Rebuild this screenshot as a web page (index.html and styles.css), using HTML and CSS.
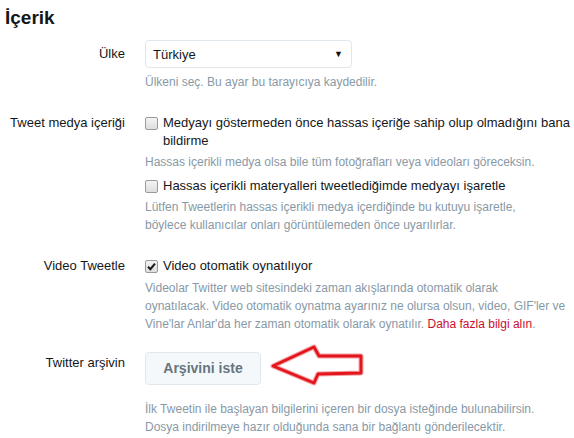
FILE: index.html
```html
<!DOCTYPE html>
<html lang="tr">
<head>
<meta charset="utf-8">
<title>İçerik</title>
<link rel="stylesheet" href="styles.css">
</head>
<body>
<div class="page">
  <h1 class="title">İçerik</h1>

  <div class="row row-country">
    <div class="label label-select">Ülke</div>
    <div class="control">
      <div class="select">
        <span class="select-value">Türkiye</span>
        <span class="select-caret">▼</span>
      </div>
      <p class="help help-select">Ülkeni seç. Bu ayar bu tarayıcıya kaydedilir.</p>
    </div>
  </div>

  <div class="row row-media">
    <div class="label">Tweet medya içeriği</div>
    <div class="control">
      <div class="check">
        <span class="box"></span>
        <span class="check-text">Medyayı göstermeden önce hassas içeriğe sahip olup olmadığını bana<br>bildirme</span>
      </div>
      <p class="help help-check">Hassas içerikli medya olsa bile tüm fotoğrafları veya videoları göreceksin.</p>
      <div class="check check-second">
        <span class="box"></span>
        <span class="check-text">Hassas içerikli materyalleri tweetlediğimde medyayı işaretle</span>
      </div>
      <p class="help help-check">Lütfen Tweetlerin hassas içerikli medya içerdiğinde bu kutuyu işaretle,<br>böylece kullanıcılar onları görüntülemeden önce uyarılırlar.</p>
    </div>
  </div>

  <div class="row row-video">
    <div class="label">Video Tweetle</div>
    <div class="control">
      <div class="check">
        <span class="box box-checked">
          <svg viewBox="0 0 13 13" width="13" height="13"><path d="M3 6.8 L5.4 9.2 L10 3.6" fill="none" stroke="#1a1a1a" stroke-width="2"/></svg>
        </span>
        <span class="check-text">Video otomatik oynatılıyor</span>
      </div>
      <p class="help help-video">Videolar Twitter web sitesindeki zaman akışlarında otomatik olarak<br>oynatılacak. Video otomatik oynatma ayarınız ne olursa olsun, video, GIF'ler ve<br>Vine'lar Anlar'da her zaman otomatik olarak oynatılır. <a class="link" href="#">Daha fazla bilgi alın</a>.</p>
    </div>
  </div>

  <div class="row row-archive">
    <div class="label label-archive">Twitter arşivin</div>
    <div class="control">
      <div class="button-line">
        <button class="btn" type="button">Arşivini iste</button>
        <svg class="arrow" viewBox="0 0 96 44" width="96" height="44">
          <path d="M4 22 L45 3 L50 12 L92 12 L92 29 L49 30 L45 39 Z" fill="none" stroke="#f4a3a5" stroke-width="5" stroke-linejoin="round"/>
          <path d="M4 22 L45 3 L50 12 L92 12 L92 29 L49 30 L45 39 Z" fill="none" stroke="#e3161d" stroke-width="2.8" stroke-linejoin="round"/>
        </svg>
      </div>
      <p class="help help-archive">İlk Tweetin ile başlayan bilgilerini içeren bir dosya isteğinde bulunabilirsin.<br>Dosya indirilmeye hazır olduğunda sana bir bağlantı gönderilecektir.</p>
    </div>
  </div>
</div>
</body>
</html>
```

FILE: styles.css
```css
html, body {
  margin: 0;
  padding: 0;
  background: #ffffff;
}

body {
  font-family: "Liberation Sans", Arial, sans-serif;
  color: #14171a;
  font-size: 13px;
}

.page {
  width: 574px;
  height: 438px;
  overflow: hidden;
}

.title {
  margin: 0;
  padding: 6px 5px 0;
  font-size: 19px;
  line-height: 24px;
  font-weight: bold;
  color: #14171a;
}

.row {
  display: flex;
  align-items: flex-start;
}

.label {
  width: 125px;
  flex: 0 0 125px;
  text-align: right;
  line-height: 18px;
  color: #14171a;
}

.control {
  margin-left: 20px;
  width: 429px;
}

.row-country { margin-top: 10px; }
.label-select { padding-top: 5px; }

.select {
  box-sizing: border-box;
  width: 207px;
  height: 28px;
  border: 1px solid #e1e8ed;
  border-radius: 4px;
  background: #ffffff;
  display: flex;
  align-items: center;
  justify-content: space-between;
  padding: 0 8px 0 7px;
}

.select-value {
  color: #14171a;
  font-size: 13px;
}

.select-caret {
  font-size: 9px;
  color: #111;
}

.help {
  margin: 0;
  color: #8899a6;
  font-size: 12px;
  line-height: 18px;
}

.help-select { margin-top: 5px; }

.row-media { margin-top: 23px; }

.check {
  display: flex;
  align-items: flex-start;
  line-height: 18px;
}

.check-second { margin-top: 6px; }

.box {
  box-sizing: border-box;
  flex: 0 0 13px;
  width: 13px;
  height: 13px;
  margin-top: 3px;
  margin-right: 5px;
  border: 1px solid #9a9a9a;
  border-radius: 2px;
  background: linear-gradient(#f4f4f4, #dedede);
  position: relative;
}

.box svg {
  position: absolute;
  left: -1px;
  top: -1px;
}

.check-text {
  color: #14171a;
  font-size: 13px;
}

.help-check { margin-top: 3px; }

.row-video { margin-top: 23px; }
.help-video { margin-top: 4px; }

.link {
  color: #c8102e;
  text-decoration: none;
}

.row-archive { margin-top: 15px; }
.label-archive { padding-top: 6px; }

.button-line {
  display: flex;
  align-items: center;
}

.btn {
  box-sizing: border-box;
  width: 116px;
  height: 33px;
  border: 1px solid #e1e8ed;
  border-radius: 4px;
  background: #f5f8fa;
  color: #66757f;
  font-family: "Liberation Sans", Arial, sans-serif;
  font-size: 14px;
  font-weight: bold;
  padding: 0;
}

.arrow {
  margin-left: 8px;
  margin-top: -4px;
}

.help-archive { margin-top: 12px; }
```
